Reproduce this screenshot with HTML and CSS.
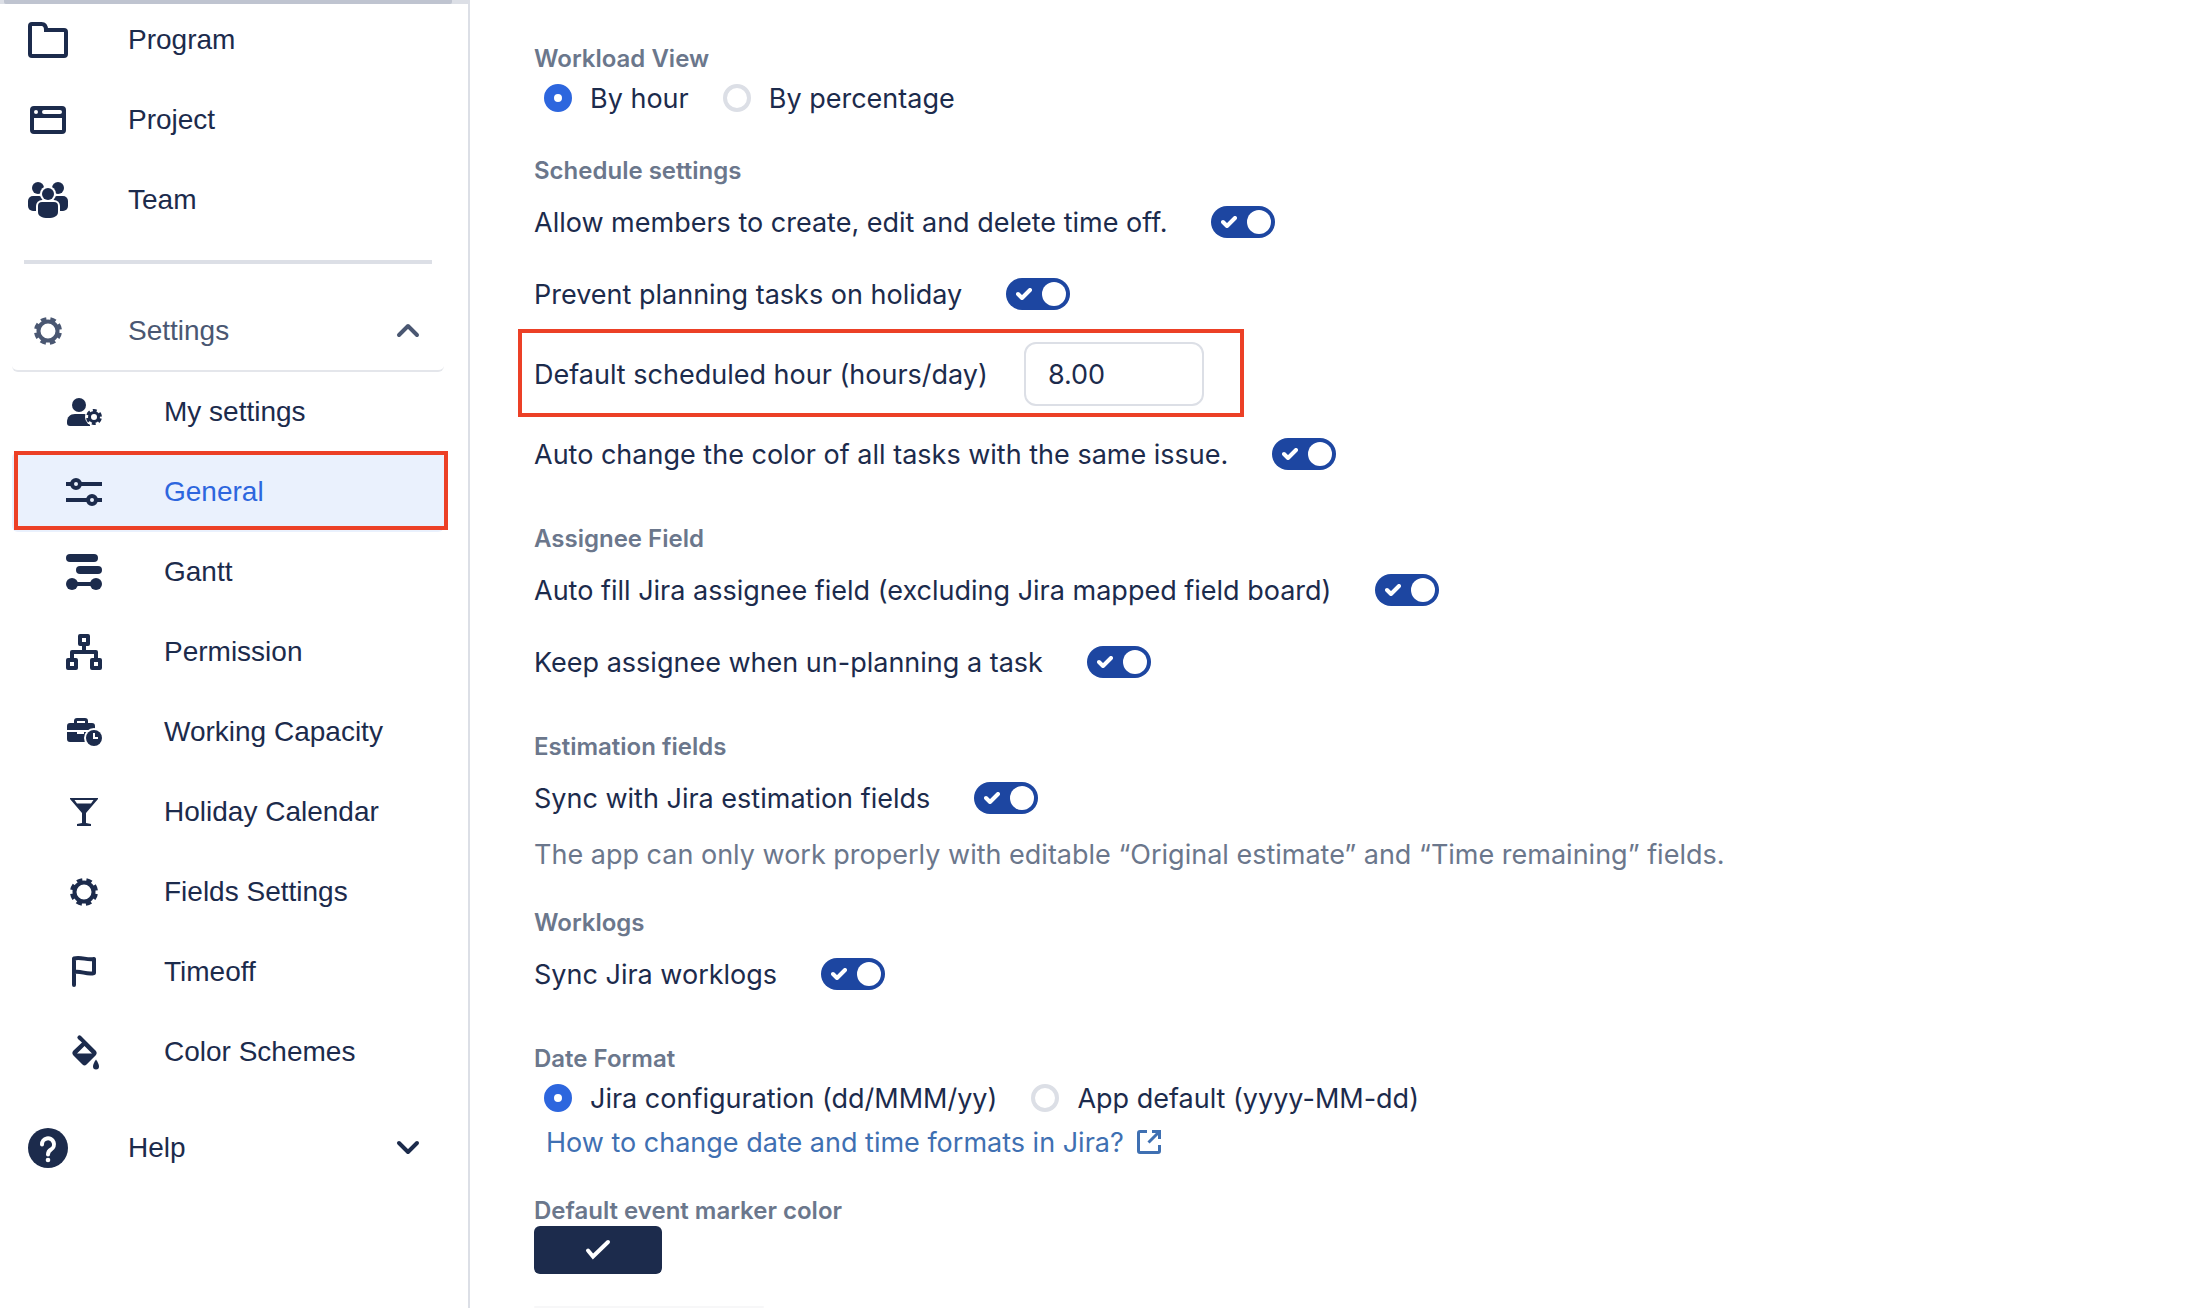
FILE: index.html
```html
<!DOCTYPE html>
<html lang="en">
<head>
    <meta charset="UTF-8">
    <meta name="viewport" content="width=device-width, initial-scale=1.0">
    <title>General settings</title>
    <link rel="stylesheet" href="styles.css">
</head>
<body>
    <nav class="sidebar">
        <div class="scrollbar"><div class="scrollbar-thumb"></div></div>

        <a class="nav-item" href="#program">
            <svg class="icon line" viewBox="0 0 40 40"><path d="M4 4h9.500c3.500 0 4.500 2.500 4.500 6H36a2 2 0 0 1 2 2v22a2 2 0 0 1-2 2H4a2 2 0 0 1-2-2V6a2 2 0 0 1 2-2z"/></svg>
            <span>Program</span>
        </a>
        <a class="nav-item" href="#project">
            <svg class="icon" viewBox="0 0 40 40"><path fill-rule="evenodd" d="M6 6h28a4 4 0 0 1 4 4v20a4 4 0 0 1-4 4H6a4 4 0 0 1-4-4V10a4 4 0 0 1 4-4zM6 18v12h28V18zM8 10a2 2 0 1 0 0 4 2 2 0 0 0 0-4zM16 10a2 2 0 0 0 0 4h16a2 2 0 0 0 0-4z"/></svg>
            <span>Project</span>
        </a>
        <a class="nav-item" href="#team">
            <svg class="icon" viewBox="0 0 40 40">
                <circle cx="10" cy="8" r="6"/><circle cx="30" cy="8" r="6"/>
                <rect x="0" y="16" width="16" height="15" rx="5"/><rect x="24" y="16" width="16" height="15" rx="5"/>
                <circle class="cut" cx="20" cy="14" r="8"/><rect class="cut" x="8" y="20" width="24" height="20" rx="6"/>
                <circle cx="20" cy="14" r="6"/><path d="M10 26a4 4 0 0 1 4-4h12a4 4 0 0 1 4 4v6c0 4-4 6-10 6s-10-2-10-6z"/>
            </svg>
            <span>Team</span>
        </a>

        <hr class="divider">

        <button class="nav-item nav-group" type="button" aria-expanded="true">
            <svg class="icon line" viewBox="0 0 40 40"><circle cx="20" cy="20" r="9.500"/><circle cx="20" cy="20" r="12" stroke-dasharray="5.4 4.025" stroke-dashoffset="-2"/></svg>
            <span>Settings</span>
            <svg class="icon line chevron" viewBox="0 0 40 40"><path stroke-linecap="round" stroke-linejoin="round" d="M11 24l9-9 9 9"/></svg>
        </button>
        <a class="nav-item sub" href="#my-settings">
            <svg class="icon" viewBox="0 0 40 40">
                <circle cx="15" cy="13" r="7"/><path d="M3 30c0-5 3-8 8-8h9c5 0 6 3 6 8v4H6a3 3 0 0 1-3-3z"/>
                <circle class="cut" cx="30" cy="25" r="9"/>
                <g class="line"><circle cx="30" cy="25" r="4.500" stroke-width="3"/><circle cx="30" cy="25" r="6.500" stroke-width="3" stroke-dasharray="3.800 3" stroke-dashoffset="-1.500"/></g>
            </svg>
            <span>My settings</span>
        </a>
        <a class="nav-item sub active marked" href="#general">
            <svg class="icon line" viewBox="0 0 40 40"><path d="M2 12h6M16 12h22M2 28h22M32 28h6"/><circle cx="12" cy="12" r="4"/><circle cx="28" cy="28" r="4"/></svg>
            <span>General</span>
        </a>
        <a class="nav-item sub" href="#gantt">
            <svg class="icon" viewBox="0 0 40 40"><rect x="2" y="2" width="32" height="8" rx="4"/><rect x="12" y="14" width="26" height="8" rx="4"/><circle cx="8" cy="32" r="6"/><circle cx="32" cy="32" r="6"/><path d="M8 30h24v4H8z"/></svg>
            <span>Gantt</span>
        </a>
        <a class="nav-item sub" href="#permission">
            <svg class="icon line" viewBox="0 0 40 40" stroke-linejoin="round"><path d="M16 4h8v8h-8zM4 28h8v8H4zM28 28h8v8h-8zM20 14v6M8 26v-6h24v6"/></svg>
            <span>Permission</span>
        </a>
        <a class="nav-item sub" href="#working-capacity">
            <svg class="icon" viewBox="0 0 40 40">
                <path fill-rule="evenodd" d="M10 11V9a3 3 0 0 1 3-3h8a3 3 0 0 1 3 3v2h4a3 3 0 0 1 3 3v4H3v-4a3 3 0 0 1 3-3zM13 9v2h8V9z"/>
                <path d="M3 20h10v2h7v-2h11v10H6a3 3 0 0 1-3-3z"/>
                <circle class="cut" cx="30" cy="26" r="10"/><circle cx="30" cy="26" r="8"/>
                <path class="cut" d="M29 21h2v4h3v2h-5z"/>
            </svg>
            <span>Working Capacity</span>
        </a>
        <a class="nav-item sub" href="#holiday-calendar">
            <svg class="icon" viewBox="0 0 40 40"><path fill-rule="evenodd" d="M6 6h28v1L22 21v10l5 1v2H13v-2l5-1V21L6 7zM10.500 8l2.500 3.500h14L29.500 8z"/></svg>
            <span>Holiday Calendar</span>
        </a>
        <a class="nav-item sub" href="#fields-settings">
            <svg class="icon line" viewBox="0 0 40 40"><circle cx="20" cy="20" r="9.500"/><circle cx="20" cy="20" r="12" stroke-dasharray="5.4 4.025" stroke-dashoffset="-2"/></svg>
            <span>Fields Settings</span>
        </a>
        <a class="nav-item sub" href="#timeoff">
            <svg class="icon line" viewBox="0 0 40 40"><path stroke-linecap="round" stroke-linejoin="round" d="M10 33V6.500c7-2 13 2 20 .5v14c-7 2-13-2.500-20-1"/></svg>
            <span>Timeoff</span>
        </a>
        <a class="nav-item sub" href="#color-schemes">
            <svg class="icon" viewBox="0 0 40 40"><path fill-rule="evenodd" d="M14 7a2 2 0 0 1 3-3l15 15q1.500 2 0 4L22.500 32.500q-2 2-4 0L9 23q-1.500-2 0-4L18 10.500zM20.500 14L13 21.500h15z"/><path d="M32 27.500c2 3 3 5 3 7a3 3 0 0 1-6 0c0-2 1-4 3-7z"/></svg>
            <span>Color Schemes</span>
        </a>

        <button class="nav-item nav-help" type="button" aria-expanded="false">
            <svg class="icon" viewBox="0 0 40 40"><circle cx="20" cy="20" r="20"/><path class="cut-line" d="M14 16.500a6 6 0 1 1 9 5c-2.200 1.300-3 2-3 5"/><circle class="cut" cx="20" cy="32" r="2.300"/></svg>
            <span>Help</span>
            <svg class="icon line chevron" viewBox="0 0 40 40"><path stroke-linecap="round" stroke-linejoin="round" d="M11 15l9 9 9-9"/></svg>
        </button>
    </nav>

    <main class="content">
        <section>
            <h2>Workload View</h2>
            <div class="radio-row">
                <label><input type="radio" name="workload" checked>By hour</label>
                <label><input type="radio" name="workload">By percentage</label>
            </div>
        </section>

        <section>
            <h2>Schedule settings</h2>
            <label class="row">Allow members to create, edit and delete time off.<input class="toggle" type="checkbox" checked></label>
            <label class="row">Prevent planning tasks on holiday<input class="toggle" type="checkbox" checked></label>
            <div class="row hours-row marked">
                <label for="hours">Default scheduled hour (hours/day)</label>
                <input class="hours" id="hours" type="text" value="8.00">
            </div>
            <label class="row">Auto change the color of all tasks with the same issue.<input class="toggle" type="checkbox" checked></label>
        </section>

        <section>
            <h2>Assignee Field</h2>
            <label class="row">Auto fill Jira assignee field (excluding Jira mapped field board)<input class="toggle" type="checkbox" checked></label>
            <label class="row">Keep assignee when un-planning a task<input class="toggle" type="checkbox" checked></label>
        </section>

        <section>
            <h2>Estimation fields</h2>
            <label class="row">Sync with Jira estimation fields<input class="toggle" type="checkbox" checked></label>
            <p class="note">The app can only work properly with editable “Original estimate” and “Time remaining” fields.</p>
        </section>

        <section>
            <h2>Worklogs</h2>
            <label class="row">Sync Jira worklogs<input class="toggle" type="checkbox" checked></label>
        </section>

        <section>
            <h2>Date Format</h2>
            <div class="radio-row">
                <label><input type="radio" name="date" checked>Jira configuration (dd/MMM/yy)</label>
                <label><input type="radio" name="date">App default (yyyy-MM-dd)</label>
            </div>
            <a class="help-link" href="#date-formats">How to change date and time formats in Jira?
                <svg class="external" viewBox="0 0 26 26"><path d="M11 2.500H4A1.500 1.500 0 0 0 2.500 4v18A1.500 1.500 0 0 0 4 23.500h18a1.500 1.500 0 0 0 1.500-1.500v-6M16 2.500h7.500V10M23 3L12.500 13.500"/></svg>
            </a>
        </section>

        <section>
            <h2>Default event marker color</h2>
            <button class="color-button" type="button" aria-label="Marker color">
                <svg viewBox="0 0 28 28"><path d="M4 14.500l5 6L24 6"/></svg>
            </button>
        </section>

        <div class="next-panel"></div>
    </main>
</body>
</html>
```

FILE: styles.css
```css
* {
    box-sizing: border-box;
}
body {
    margin: 0;
    display: flex;
    height: 100vh;
    overflow: hidden;
    background-color: #fff;
    color: #1c2b4c;
    font-family: Inter, "Liberation Sans", sans-serif;
    font-size: 27px;
}

/* sidebar */
.sidebar {
    position: relative;
    flex: none;
    width: 470px;
    padding: 0 24px 0 12px;
    border-right: 2px solid #dcdfe6;
    font-family: "Liberation Sans", Arial, sans-serif;
    font-size: 28px;
}
.scrollbar {
    position: absolute;
    top: 0;
    left: 0;
    right: 0;
    height: 4px;
    padding: 0 16px 0 4px;
    background-color: #dcdfe6;
}
.scrollbar-thumb {
    height: 4px;
    background-color: #bfc4d0;
    border-radius: 0 0 2px 2px;
}
.nav-item {
    position: relative;
    display: flex;
    align-items: center;
    gap: 60px;
    width: 100%;
    height: 80px;
    padding: 0 16px;
    border: 0;
    border-radius: 6px;
    background: none;
    color: inherit;
    font: inherit;
    text-align: left;
    text-decoration: none;
}
.nav-item.sub {
    padding-left: 52px;
}
.nav-item.active {
    background-color: #eaf1fd;
}
.nav-item.active span {
    color: #2d66de;
}
.nav-group {
    color: #4a5772;
    border-bottom: 2px solid #e4e6eb;
}
.nav-help {
    margin-top: 16px;
}
.divider {
    height: 4px;
    margin: 20px 12px 28px;
    border: 0;
    background-color: #dcdfe6;
}
.icon {
    flex: none;
    width: 40px;
    height: 40px;
    fill: currentColor;
}
.line {
    fill: none;
    stroke: currentColor;
    stroke-width: 4;
}
.cut {
    fill: #fff;
}
.cut-line {
    fill: none;
    stroke: #fff;
    stroke-width: 4;
    stroke-linecap: round;
}
.chevron {
    margin-left: auto;
}

/* red frames drawn over the highlighted rows */
.marked::after {
    content: "";
    position: absolute;
    border: 4px solid #ec4026;
}
.nav-item.marked::after {
    inset: -1px -4px 2px 2px;
}
.hours-row.marked::after {
    inset: -1px -40px 1px -16px;
}

/* settings form */
.content {
    flex: 1;
    display: flex;
    flex-direction: column;
    gap: 32px;
    padding: 42px 64px 0;
}
h2 {
    margin: 0;
    padding-top: 2px;
    color: #6b778c;
    font-size: 24px;
    font-weight: 600;
    line-height: 30px;
}
.row {
    position: relative;
    display: flex;
    align-items: center;
    gap: 44px;
    width: fit-content;
    height: 72px;
}
.hours-row {
    gap: 36px;
    height: 88px;
}
.toggle {
    appearance: none;
    display: flex;
    align-items: center;
    justify-content: flex-end;
    width: 64px;
    height: 32px;
    margin: 0;
    padding: 4px;
    border-radius: 16px;
    background: #1d46a1 url("data:image/svg+xml,%3Csvg xmlns='http://www.w3.org/2000/svg' width='16' height='12' fill='none' stroke='white' stroke-width='4' stroke-linecap='round' stroke-linejoin='round'%3E%3Cpath d='M2 6l4 4 8-8'/%3E%3C/svg%3E") no-repeat 10px 10px;
}
.toggle::after {
    content: "";
    width: 24px;
    height: 24px;
    border-radius: 50%;
    background-color: #fff;
}
.hours {
    width: 180px;
    height: 64px;
    padding: 0 22px;
    border: 2px solid #dcdfe6;
    border-radius: 12px;
    background-color: #fff;
    color: inherit;
    font: inherit;
}
.radio-row {
    display: flex;
    gap: 34px;
    height: 48px;
    padding-left: 10px;
}
.radio-row label {
    display: flex;
    align-items: center;
    gap: 18px;
}
.radio-row input {
    appearance: none;
    width: 28px;
    height: 28px;
    margin: 0;
    border: 4px solid #dcdfe6;
    border-radius: 50%;
}
.radio-row input:checked {
    border: 10px solid #2d66de;
}
.note {
    margin: 0;
    padding-top: 2px;
    color: #6b778c;
    line-height: 38px;
}
.help-link {
    display: flex;
    align-items: center;
    gap: 12px;
    width: fit-content;
    height: 40px;
    padding-left: 12px;
    color: #3f70b2;
    text-decoration: none;
}
.external {
    width: 26px;
    height: 26px;
    fill: none;
    stroke: currentColor;
    stroke-width: 3;
}
.color-button {
    display: flex;
    align-items: center;
    justify-content: center;
    width: 128px;
    height: 48px;
    padding: 0;
    border: 0;
    border-radius: 6px;
    background-color: #1c2b4c;
}
.color-button svg {
    width: 28px;
    height: 28px;
    fill: none;
    stroke: #fff;
    stroke-width: 4;
    stroke-linecap: round;
}
.next-panel {
    width: 230px;
    height: 64px;
    border-radius: 6px;
    background-color: #f7f7f8;
}
```
